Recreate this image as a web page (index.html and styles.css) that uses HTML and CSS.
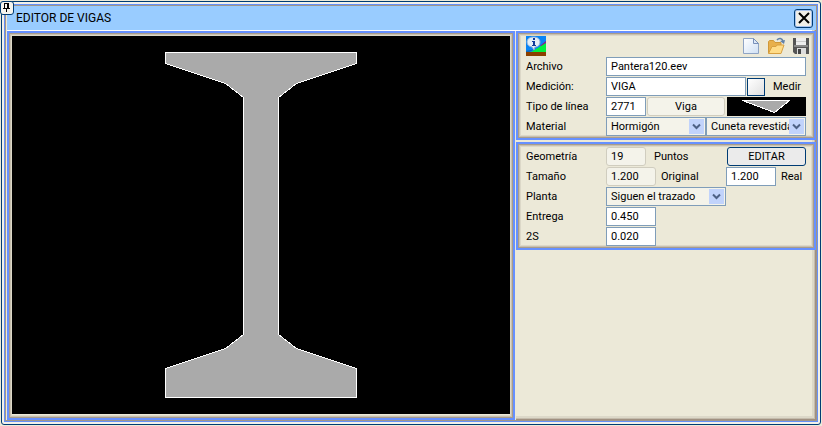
FILE: index.html
```html
<!DOCTYPE html>
<html lang="es">
<head>
<meta charset="utf-8">
<title>Editor de vigas</title>
<link rel="stylesheet" href="styles.css">
</head>
<body>
<div class="window">
  <button class="pin" type="button" aria-label="Fijar">
    <svg width="9" height="9" viewBox="0 0 9 9" shape-rendering="crispEdges"><path d="M2 0h5v1H2zM2 1h1v4H2zM5 1h2v4H5zM1 5h7v1H1zM4 6h1v3H4z"/></svg>
  </button>
  <div class="frame">
    <header class="title">
      <h1>EDITOR DE VIGAS</h1>
      <button class="close" type="button" aria-label="Cerrar">
        <svg width="12" height="12" viewBox="0 0 12 12"><path d="M1 1L11 11M11 1L1 11" stroke="#000" stroke-width="2"/></svg>
      </button>
    </header>
    <main class="main">
      <section class="panel view">
        <svg class="beam" viewBox="0 0 498 378" preserveAspectRatio="xMidYMin meet">
          <path d="M153.500 16.500H344.500V27.500L284.500 47.500L266.500 61.500V298.500L284.500 312.500L344.500 332.500V361.500H153.500V332.500L213.500 312.500L231.500 298.500V61.500L213.500 47.500L153.500 27.500Z" fill="#aaa" stroke="#fff" shape-rendering="crispEdges"/>
        </svg>
      </section>
      <div class="side">
        <section class="panel form">
          <div class="tools">
            <button class="tool info" type="button" aria-label="Información">
              <svg width="20" height="20" viewBox="0 0 20 20"><path fill="#0a84f5" d="M0 0h20v20H0z"/><path fill="#8c1a8c" d="M15 9l5-4v5h-6z"/><path fill="#00f040" d="M5 16L20 7v9z"/><path fill="#1068b8" d="M0 15l9-2-6 3H0z"/><path fill="#8b4000" d="M0 16h20v4H0z"/><path fill="#e4eef8" stroke="#8cb0d8" d="M7.500 1c4 0 6.500 2 6.500 5s-2 5-5 5l-1 3-2-3C3 10.500 1 9 1 6s2.500-5 6.500-5z"/><path fill="#123c9c" d="M7 2h2v2H7zM6 5h3v4h1v1H6V9h1V6H6z"/></svg>
            </button>
            <button class="tool" type="button" aria-label="Nuevo">
              <svg width="18" height="18" viewBox="0 0 18 18"><defs><linearGradient id="page" x1="0" y1="0" x2="1" y2="1"><stop offset="0" stop-color="#fff"/><stop offset="1" stop-color="#cfe0f4"/></linearGradient></defs><path fill="url(#page)" stroke="#8fa4c4" d="M1.500 1.500h10l5 5v10h-15z"/><path fill="#dce8f8" stroke="#7890b8" d="M11.500 1.500v5h5z"/></svg>
            </button>
            <button class="tool" type="button" aria-label="Abrir">
              <svg width="18" height="18" viewBox="0 0 18 18"><path fill="#e8b04c" stroke="#d09838" d="M1.500 16V4.500l1-1h4l1.500 2h6V9l-12 7z"/><path fill="#ffdc88" stroke="#d8a040" d="M1.500 16.500L5 9.500h4l1-1.500h7l-3 8.500z"/><path fill="none" stroke="#6080a8" stroke-width="1.500" d="M10 3c2-2.500 5-2 6 1"/><path fill="#6080a8" d="M13 4l5-1-1 4z"/></svg>
            </button>
            <button class="tool" type="button" aria-label="Guardar">
              <svg width="18" height="18" viewBox="0 0 18 18"><path fill="#555" d="M1 1h16v16H3l-2-2z"/><path fill="#eee" d="M4 1h10v7H4z"/><path fill="#ccc" d="M4 4h10v1H4z"/><path fill="#888" d="M2 8h14v2H2z"/><path fill="#ddd" d="M5 11h9v6H5z"/><path fill="#444" d="M6 12h3v5H6z"/></svg>
            </button>
          </div>
          <div class="row">
            <label class="name" for="archivo">Archivo</label>
            <input class="grow" id="archivo" value="Pantera120.eev">
          </div>
          <div class="row">
            <label class="name" for="medicion">Medición:</label>
            <input class="w140" id="medicion" value="VIGA">
            <button class="measure" id="medir" type="button" aria-label="Medir"></button>
            <label class="after" for="medir">Medir</label>
          </div>
          <div class="row">
            <label class="name" for="linea">Tipo de línea</label>
            <input class="w40" id="linea" value="2771">
            <button class="flat" type="button">Viga</button>
            <svg class="sample" width="79" height="19" viewBox="0 0 79 19"><path fill="#aaa" stroke="#fff" shape-rendering="crispEdges" d="M15.500 3.500H62.500L47.500 15.500Z"/></svg>
          </div>
          <div class="row">
            <label class="name" for="material">Material</label>
            <select class="w100" id="material"><option>Hormigón</option></select>
            <select class="w100" aria-label="Tipo de material"><option>Cuneta revestida</option></select>
          </div>
        </section>
        <section class="panel form">
          <div class="row">
            <label class="name" for="puntos">Geometría</label>
            <input class="w40 off" id="puntos" value="19" readonly>
            <label class="after" for="puntos">Puntos</label>
            <button class="edit end" type="button">EDITAR</button>
          </div>
          <div class="row">
            <label class="name" for="original">Tamaño</label>
            <input class="w50 off" id="original" value="1.200" readonly>
            <label class="near" for="original">Original</label>
            <input class="w50 end" id="real" value="1.200">
            <label class="near last" for="real">Real</label>
          </div>
          <div class="row">
            <label class="name" for="planta">Planta</label>
            <select class="w120" id="planta"><option>Siguen el trazado</option></select>
          </div>
          <div class="row">
            <label class="name" for="entrega">Entrega</label>
            <input class="w50" id="entrega" value="0.450">
          </div>
          <div class="row">
            <label class="name" for="dos-s">2S</label>
            <input class="w50" id="dos-s" value="0.020">
          </div>
        </section>
      </div>
    </main>
  </div>
</div>
</body>
</html>
```
FILE: styles.css
```css
* { box-sizing: border-box; }

body {
  margin: 0;
  padding: 1px;
  min-height: 100vh;
  display: flex;
  background: #ece9d8;
  color: #000;
}

body, button, input, select {
  font-family: "Roboto", "Liberation Sans", sans-serif;
  font-size: 11px;
  line-height: 16px;
}

.window {
  position: relative;
  flex: 1;
  display: flex;
  padding: 2px;
  border: 1px solid #003c74;
  border-radius: 3px;
  background: #f2f1ea;
}

.pin {
  position: absolute;
  top: -1px;
  left: -2px;
  width: 14px;
  height: 14px;
  padding: 1px;
  display: flex;
  border: 1px solid #003c74;
  border-radius: 3px;
  background: #f5f4ee;
}

.frame {
  flex: 1;
  display: flex;
  flex-direction: column;
  border: 1px solid #6690f8;
  box-shadow: inset 0 0 0 1px #a09688;
  padding: 1px 1px 1px 2px;
  background: #ece9d8;
}

.title {
  display: flex;
  align-items: center;
  justify-content: space-between;
  height: 24px;
  padding: 0 3px 0 9px;
  background: #99ccff;
}

h1 {
  margin: 0;
  font-size: 12px;
  font-weight: normal;
}

.close {
  width: 19px;
  height: 19px;
  padding: 0;
  display: flex;
  align-items: center;
  justify-content: center;
  border: 1px solid #003c74;
  border-radius: 3px;
  background: #f0efe8;
  box-shadow: inset 0 0 0 1px #a8c4f0;
}

.main {
  flex: 1;
  display: grid;
  grid-template-columns: minmax(0, 1fr) 300px;
  gap: 1px;
  box-shadow: inset 0 1px 0 #fff;
}

.panel {
  border: 2px solid #6690ff;
  box-shadow: inset 0 0 0 1px #a89c8c, inset 0 0 0 2px #c8c0b0, inset 0 0 0 3px #dcd8c8;
}

.view {
  display: flex;
  padding: 3px 3px 4px;
  margin-top: 1px;
}

.beam {
  flex: 1;
  min-width: 0;
  background: #000;
}

.side {
  display: flex;
  flex-direction: column;
  gap: 2px;
  padding-top: 1px;
  box-shadow: inset -1px -1px 0 #a09080, inset -2px -2px 0 #c4bcac, inset -4px -4px 0 #dcd8c8;
}

.form {
  display: flex;
  flex-direction: column;
  gap: 1px;
  padding: 3px 8px 2px;
  background: #ece9d8;
}

.tools, .row {
  display: flex;
  align-items: center;
}

.tools {
  height: 20px;
  gap: 7px;
  margin-right: -4px;
}

.tool {
  padding: 0;
  display: flex;
  border: 0;
  background: none;
}

.info { margin-right: auto; }

.row { height: 19px; }

.name { width: 80px; }
.after { margin-left: 8px; }
.near { margin-left: 5px; }
.last { width: 25px; }

input, select, .flat, .edit {
  height: 19px;
  margin: 0;
  border: 1px solid #7f9db9;
  border-radius: 0;
  color: #000;
}

input {
  min-width: 0;
  padding: 0 4px;
  background: #fff;
}

.off, .flat {
  border-color: #d0cdbf;
  border-radius: 3px;
  background: #f4f3ea;
}

.grow { flex: 1; }
.w40 { width: 40px; }
.w50 { width: 50px; }
.w100 { width: 100px; }
.w120 { width: 120px; }
.w140 { width: 140px; }

.end { margin-left: auto; }

select {
  appearance: none;
  padding: 0 16px 0 4px;
  background:
    url("data:image/svg+xml,%3Csvg xmlns='http://www.w3.org/2000/svg' width='9' height='7'%3E%3Cpath d='M1 1.500l3.500 3.500L8 1.500' fill='none' stroke='%234d6185' stroke-width='2'/%3E%3C/svg%3E") right 4px center no-repeat,
    linear-gradient(#c1d3fb, #c1d3fb) right 1px center / 15px 15px no-repeat,
    #f4f3ea;
}

.measure {
  width: 18px;
  height: 18px;
  margin-left: 1px;
  padding: 0;
  border: 1px solid #003c74;
  background: linear-gradient(135deg, #fff, #e0e0e0);
}

.flat {
  width: 78px;
  margin-left: 1px;
}

.sample {
  margin-left: auto;
  background: #000;
}

.edit {
  width: 79px;
  border-color: #003c74;
  border-radius: 3px;
  background: #ebebeb;
}
```
